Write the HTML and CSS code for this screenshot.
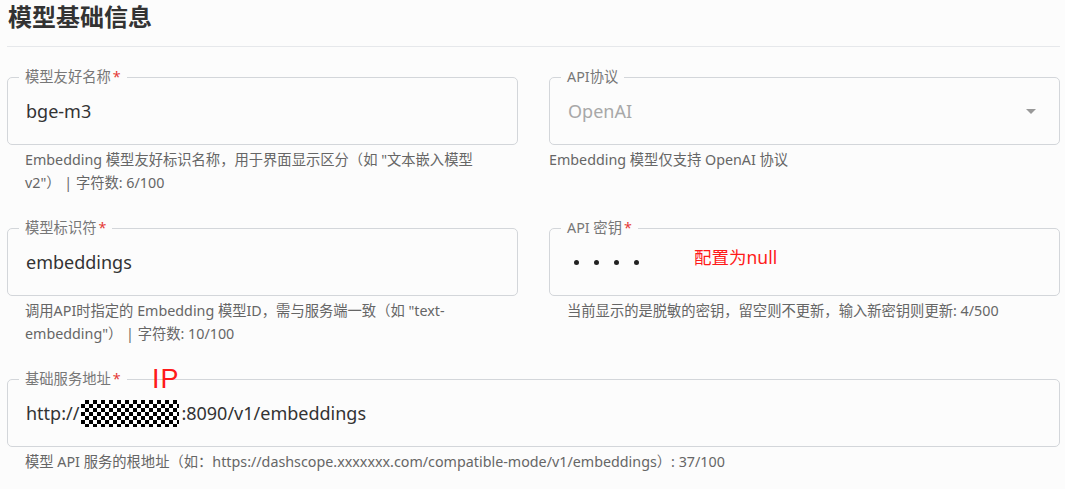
FILE: index.html
```html
<!DOCTYPE html>
<html>
<head>
    <title>模型基础信息</title>
    <link rel="stylesheet" href="styles.css">
</head>
<body>
    <div class="page">
        <h2 class="section-title">模型基础信息</h2>
        <div class="divider"></div>

        <div class="form-grid">
            <div class="field">
                <div class="box">
                    <span class="label">模型友好名称<b class="req">*</b></span>
                    <span class="value">bge-m3</span>
                </div>
                <p class="helper">Embedding 模型友好标识名称，用于界面显示区分（如 "文本嵌入模型 v2"） | 字符数: 6/100</p>
            </div>

            <div class="field">
                <div class="box">
                    <span class="label">API协议</span>
                    <span class="value muted">OpenAI</span>
                    <span class="arrow"></span>
                </div>
                <p class="helper flush">Embedding 模型仅支持 OpenAI 协议</p>
            </div>

            <div class="field">
                <div class="box">
                    <span class="label">模型标识符<b class="req">*</b></span>
                    <span class="value">embeddings</span>
                </div>
                <p class="helper">调用API时指定的 Embedding 模型ID，需与服务端一致（如 "text-embedding"） | 字符数: 10/100</p>
            </div>

            <div class="field">
                <div class="box">
                    <span class="label">API 密钥<b class="req">*</b></span>
                    <span class="value dots"><i></i><i></i><i></i><i></i></span>
                    <span class="note note-key">配置为null</span>
                </div>
                <p class="helper">当前显示的是脱敏的密钥，留空则不更新，输入新密钥则更新: 4/500</p>
            </div>

            <div class="field wide">
                <div class="box">
                    <span class="label">基础服务地址<b class="req">*</b></span>
                    <span class="note note-ip">IP</span>
                    <span class="value">http://<span class="masked"></span>:8090/v1/embeddings</span>
                </div>
                <p class="helper">模型 API 服务的根地址（如：https://dashscope.xxxxxxx.com/compatible-mode/v1/embeddings）: 37/100</p>
            </div>
        </div>
    </div>
</body>
</html>
```

FILE: styles.css
```css
body {
    margin: 0;
    background-color: #fcfcfc;
    font-family: "Noto Sans", "Noto Sans CJK SC", sans-serif;
    color: #333;
}
.page {
    padding: 0 5px 0 7px;
}
.section-title {
    margin: 0;
    padding-left: 1px;
    font-size: 24px;
    line-height: 34px;
    font-weight: bold;
    color: #333;
}
.divider {
    height: 1px;
    margin-top: 12px;
    background: #e6e8eb;
}
.form-grid {
    display: grid;
    grid-template-columns: 1fr 1fr;
    column-gap: 31px;
    row-gap: 34px;
    margin-top: 30px;
}
.field.wide {
    grid-column: 1 / 3;
}
.box {
    position: relative;
    display: flex;
    align-items: center;
    box-sizing: border-box;
    height: 68px;
    padding: 0 18px;
    border: 1px solid #d3d6da;
    border-radius: 5px;
}
.label {
    position: absolute;
    top: -10px;
    left: 11px;
    padding: 0 6px;
    background: #fcfcfc;
    font-size: 14.3px;
    line-height: 18px;
    color: #777;
}
.req {
    font-weight: normal;
    color: #e53935;
    margin-left: 2px;
}
.value {
    font-size: 18px;
    color: #333;
    display: flex;
    align-items: center;
}
.value.muted {
    color: #a8a8a8;
}
.arrow {
    margin-left: auto;
    margin-right: 5px;
    border-left: 5px solid transparent;
    border-right: 5px solid transparent;
    border-top: 5px solid #999;
}
.dots {
    padding-left: 6px;
}
.dots i {
    width: 5px;
    height: 5px;
    border-radius: 50%;
    background: #222;
    margin-right: 15px;
}
.masked {
    display: inline-block;
    width: 98px;
    height: 27px;
    margin: 0 2px;
    background: conic-gradient(#000 25%, #fff 0 50%, #000 0 75%, #fff 0) 0 0 / 8px 8px;
}
.note {
    position: absolute;
    color: #ff1a1a;
}
.note-key {
    left: 144px;
    top: 15px;
    font-size: 17.5px;
}
.note-ip {
    left: 144px;
    top: -17px;
    font-family: "Liberation Sans", sans-serif;
    font-size: 27px;
    line-height: 32px;
    letter-spacing: 1px;
}
.helper {
    margin: 3px 0 0;
    padding: 0 18px;
    font-size: 14.3px;
    line-height: 23px;
    color: #666;
}
.helper.flush {
    padding-left: 0;
}
```
